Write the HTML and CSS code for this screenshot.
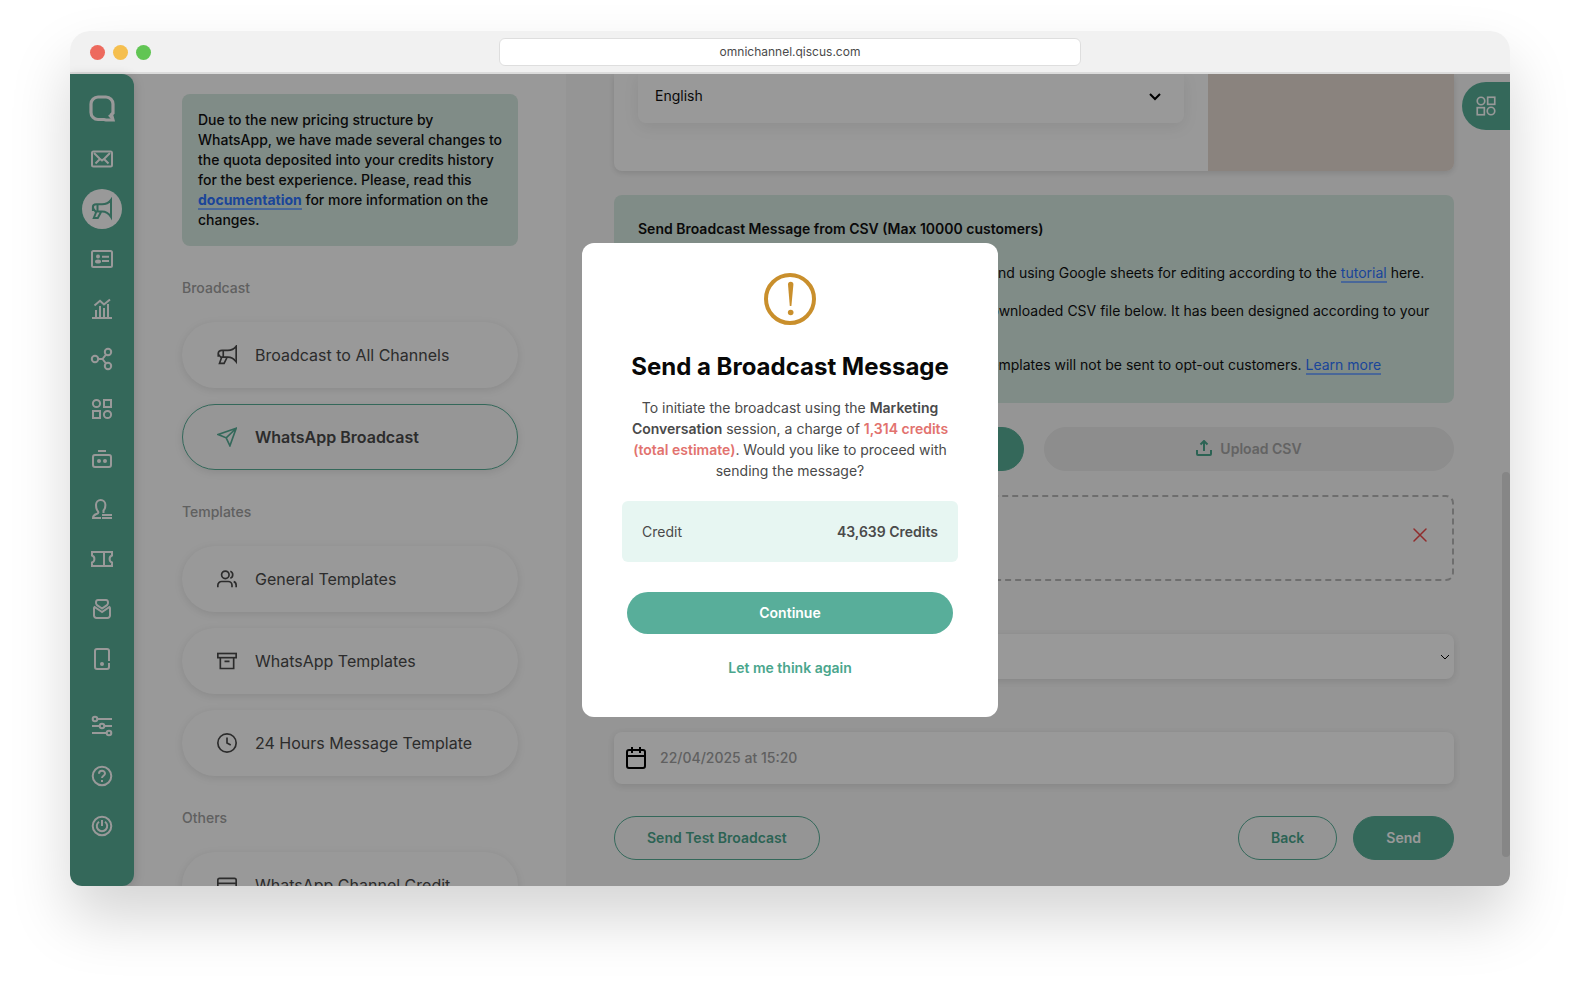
FILE: index.html
```html
<!DOCTYPE html>
<html lang="en">
<head>
  <meta charset="UTF-8">
  <title>Qiscus Omnichannel - WhatsApp Broadcast</title>
  <link rel="stylesheet" href="styles.css">
</head>
<body>

  <div class="browser">
    <div class="titlebar">
      <div class="dots">
        <span class="dot red"></span>
        <span class="dot yellow"></span>
        <span class="dot green"></span>
      </div>
      <input class="address" type="text" value="omnichannel.qiscus.com" aria-label="Address">
    </div>

    <div class="app">
      <!-- Sidebar -->
      <nav class="sidebar">
        <svg class="logo" viewBox="0 0 26 27"><path d="M9 2h8a7 7 0 0 1 7 7v9l-1.500 1.500 1.500 5.500h-7l-2-.5H9a7 7 0 0 1-7-7V9a7 7 0 0 1 7-7z" stroke-width="3.200"/><path d="M20 20l4 4.500" stroke-width="2.500"/></svg>
        <button class="nav-btn" aria-label="Inbox"><svg viewBox="0 0 24 24"><rect x="2" y="4.500" width="20" height="15" rx="1.500"/><path d="M4 6l5.500 5.500L12 13.500l2.500-2L20 6M5.500 16.500l4-4M18.500 16.500l-4-4"/></svg></button>
        <button class="nav-btn active" aria-label="Broadcast"><svg viewBox="0 0 24 24"><path d="M21 2.800c-2.500 3.500-6 4.500-9 4.500H6.200C4 7.300 2.900 8.500 2.900 10c0 1.600 1.100 2.600 2.500 4.500H12c3 0 6.500 1.500 9 5.500zM7.500 7.500v7M6.200 15l-2.400 6h4l3.200-6M2.900 9.500V14"/></svg></button>
        <button class="nav-btn" aria-label="Contacts"><svg viewBox="0 0 24 24"><rect x="2" y="4" width="20" height="16" rx="1.500"/><circle class="fill" cx="8" cy="9.600" r="2"/><ellipse class="fill" cx="8" cy="14.600" rx="3" ry="2"/><path d="M12 9.800h7M12 14h7"/></svg></button>
        <button class="nav-btn" aria-label="Analytics"><svg viewBox="0 0 24 24"><path d="M2 21h20M6 21v-8M10 21V9M14 21V11M18 21V7M4.500 8.500L10 3.800l4 3.700 6-5"/></svg></button>
        <button class="nav-btn" aria-label="Integration"><svg viewBox="0 0 24 24"><circle cx="5" cy="12" r="3.200"/><circle cx="18" cy="5" r="3.200"/><circle cx="18" cy="19" r="3.200"/><path d="M8 12h4.500L16 7.500M12.500 12l3.500 4.500"/></svg></button>
        <button class="nav-btn" aria-label="App center"><svg viewBox="0 0 24 24"><circle cx="6.500" cy="6.500" r="3.600"/><rect x="14" y="3" width="7" height="7"/><rect x="3" y="14" width="7" height="7"/><circle cx="17.500" cy="17.500" r="3.600"/></svg></button>
        <button class="nav-btn" aria-label="Bot"><svg viewBox="0 0 24 24"><rect x="3" y="8" width="18" height="12" rx="2"/><path d="M8 4h8"/><circle class="fill" cx="9" cy="14" r="2"/><circle class="fill" cx="15" cy="14" r="2"/></svg></button>
        <button class="nav-btn" aria-label="Agents"><svg viewBox="0 0 24 24"><path d="M11 21H3c0-2.500 1.500-3.300 3.500-4 2-.6 2.300-2 1.200-3C6.500 12.500 6 10.500 6 8a4.700 5 0 0 1 9.400 0c0 2.500-.4 4-1.900 5.500V16M12 18h10M12 21h10"/></svg></button>
        <button class="nav-btn" aria-label="Tickets"><svg viewBox="0 0 24 24"><path d="M2 5h20v3.500c-3.200 1-3.200 6 0 7V19H2v-3.500c3.200-1 3.200-6 0-7zM14 5v14"/></svg></button>
        <button class="nav-btn" aria-label="Mail"><svg viewBox="0 0 24 24"><path d="M12 15l-7.500-5C3.800 10.500 4 11 4 12v6.500A2.500 2.500 0 0 0 6.500 21h11a2.500 2.500 0 0 0 2.500-2.500V12c0-1 .2-1.500-.5-2zM12 11.500L7 8.200C5.500 7 5.500 3 8 3h8c2.500 0 2.500 4 1 5.200z"/></svg></button>
        <button class="nav-btn" aria-label="Devices"><svg viewBox="0 0 24 24"><path d="M19 14V4a2 2 0 0 0-2-2H7a2 2 0 0 0-2 2v16a2 2 0 0 0 2 2h10a2 2 0 0 0 2-2v-4"/><circle class="fill" cx="12" cy="17" r="2"/></svg></button>
        <button class="nav-btn settings" aria-label="Settings"><svg viewBox="0 0 24 24"><circle cx="5" cy="5" r="2.300"/><circle cx="12" cy="12" r="2.300"/><circle cx="19" cy="19" r="2.300"/><path d="M7.500 5H22M2 12h7.500M14.500 12H22M2 19h14.500"/></svg></button>
        <button class="nav-btn" aria-label="Help"><svg viewBox="0 0 24 24"><circle cx="12" cy="12" r="9.300"/><path d="M9 9.800c0-4 6-4 6-.3 0 2.200-3 2.200-3 4.500M12 16v2"/></svg></button>
        <button class="nav-btn" aria-label="Log out"><svg viewBox="0 0 24 24"><circle cx="12" cy="12" r="9.300"/><path d="M9 7.800a5.200 5.200 0 1 0 6 0M12 6v6"/></svg></button>
      </nav>

      <!-- Broadcast menu -->
      <aside class="menu">
        <p class="notice">Due to the new pricing structure by WhatsApp, we have made several changes to the quota deposited into your credits history for the best experience. Please, read this <a class="link bold" href="#">documentation</a> for more information on the changes.</p>

        <h2>Broadcast</h2>
        <div class="menu-group">
          <a class="menu-item" href="#"><svg viewBox="0 0 24 24"><path d="M23 1.500c-3 4-7 5-10 5H6C3.200 6.500 1.500 8 1.500 10c0 1.800 1.200 3 3 4.500H13c3 0 7 1.500 10 5.500zM7.500 6.500v8M5.500 15L3 22h5.500l3.500-7M1.500 9.500V14"/></svg>Broadcast to All Channels</a>
          <a class="menu-item selected" href="#"><svg viewBox="0 0 24 24"><path d="M23 1.500L1.500 9l9.500 4 4.500 9.500zM23 1.500L11 13"/></svg>WhatsApp Broadcast</a>
        </div>

        <h2>Templates</h2>
        <div class="menu-group">
          <a class="menu-item" href="#"><svg viewBox="0 0 24 24"><circle cx="10" cy="7" r="4.500"/><path d="M1 22v-2.500a4.500 4.500 0 0 1 4.500-4.500h8a4.500 4.500 0 0 1 4.500 4.500V22M16 2.800a4.500 4.500 0 0 1 0 8.400M20 15.200c2 .5 3 2 3 4.300V22"/></svg>General Templates</a>
          <a class="menu-item" href="#"><svg viewBox="0 0 24 24"><rect x="1" y="3" width="22" height="5"/><path d="M4 8v13h16V8M9 12.500h6"/></svg>WhatsApp Templates</a>
          <a class="menu-item" href="#"><svg viewBox="0 0 24 24"><circle cx="12" cy="12" r="11"/><path d="M12 5.500V12l4.500 2.500"/></svg>24 Hours Message Template</a>
        </div>

        <h2>Others</h2>
        <div class="menu-group">
          <a class="menu-item" href="#"><svg viewBox="0 0 24 24"><rect x="1" y="4" width="22" height="17" rx="2"/><path d="M1 10h22"/></svg>WhatsApp Channel Credit</a>
        </div>
      </aside>

      <!-- Broadcast form -->
      <main class="content">
        <div class="preview">
          <div class="preview-form">
            <div class="language">
              <select aria-label="Language"><option>English</option></select>
              <svg viewBox="0 0 12 8"><path d="M1 1l5 5 5-5"/></svg>
            </div>
          </div>
          <div class="preview-phone"></div>
        </div>

        <section class="csv-info">
          <h3>Send Broadcast Message from CSV (Max 10000 customers)</h3>
          <ol>
            <li>Download the CSV template here first. We recommend using Google sheets for editing according to the <a class="link" href="#">tutorial</a> here.</li>
            <li>Please fill in your required customer data into the downloaded CSV file below. It has been designed according to your message template.</li>
            <li>Kindly note that messages that use our Marketing templates will not be sent to opt-out customers. <a class="link" href="#">Learn more</a></li>
          </ol>
        </section>

        <div class="csv-actions">
          <button class="btn primary">Download CSV</button>
          <button class="btn muted" disabled><svg viewBox="0 0 16 16"><path d="M1 10v4a1 1 0 0 0 1 1h12a1 1 0 0 0 1-1v-4M8 11V1.500M4.500 4.500L8 1l3.500 3.500"/></svg>Upload CSV</button>
        </div>

        <div class="file-box">
          <span>customers.csv</span>
          <button class="remove" aria-label="Remove file"><svg viewBox="0 0 14 14"><path d="M1 1l12 12M13 1L1 13"/></svg></button>
        </div>

        <label for="schedule">Schedule</label>
        <div class="field">
          <select id="schedule"><option>Send later</option></select>
          <svg viewBox="0 0 12 8"><path d="M2 2l4 4 4-4"/></svg>
        </div>

        <label for="sendAt">Date and time</label>
        <div class="field date">
          <svg viewBox="0 0 20 22"><rect x="1" y="3" width="18" height="18" rx="2"/><path d="M1 9h18M6 0v6M14 0v6"/></svg>
          <input type="text" id="sendAt" value="22/04/2025 at 15:20">
        </div>

        <div class="form-actions">
          <button class="btn outline">Send Test Broadcast</button>
          <div class="form-right">
            <button class="btn outline">Back</button>
            <button class="btn primary">Send</button>
          </div>
        </div>
      </main>

      <div class="scroll-thumb"></div>
      <button class="app-tab" aria-label="Open apps"><svg viewBox="0 0 24 24"><circle cx="6" cy="6" r="4.500"/><rect x="14" y="1.500" width="8.500" height="8.500"/><rect x="1.500" y="14" width="8.500" height="8.500"/><circle cx="18" cy="18" r="4.500"/></svg></button>

      <!-- Confirmation dialog -->
      <div class="overlay">
        <div class="modal" role="dialog" aria-labelledby="modalTitle">
          <svg class="warning" viewBox="0 0 52 52"><circle cx="26" cy="26" r="24"/><path d="M24 11.500a2.700 2.700 0 0 1 5.400 0L27.400 33h-1.600z"/><circle class="point" cx="26.700" cy="39.500" r="2.800"/></svg>
          <h1 id="modalTitle">Send a Broadcast Message</h1>
          <p>To initiate the broadcast using the <b>Marketing Conversation</b> session, a charge of <b class="cost">1,314 credits (total estimate)</b>. Would you like to proceed with sending the message?</p>
          <div class="credit">
            <span>Credit</span>
            <b>43,639 Credits</b>
          </div>
          <button class="continue">Continue</button>
          <button class="cancel">Let me think again</button>
        </div>
      </div>
    </div>
  </div>

</body>
</html>
```
FILE: styles.css
```css
* {
  box-sizing: border-box;
}
body {
  margin: 0;
  padding: 31px 70px 109px;
  height: 100vh;
  background: #fff;
  font-family: Inter, sans-serif;
  font-size: 14px;
  color: #101010;
}
button, input, select {
  font-family: inherit;
  font-size: 14px;
}
button {
  cursor: pointer;
}
svg {
  fill: none;
  stroke: currentColor;
  stroke-width: 2;
  flex-shrink: 0;
}
.browser {
  height: 100%;
  display: flex;
  flex-direction: column;
  border-radius: 20px 20px 12px 12px;
  overflow: hidden;
  box-shadow: 0 32px 60px rgba(0,0,0,0.17);
}
.titlebar {
  height: 43px;
  flex-shrink: 0;
  display: grid;
  grid-template-columns: 1fr minmax(200px, 582px) 1fr;
  align-items: center;
  background: #f1f1f1;
  border-bottom: 2px solid #dcdcdc;
}
.dots {
  display: flex;
  gap: 8px;
  padding: 2px 0 0 20px;
}
.dot {
  width: 15px;
  height: 15px;
  border-radius: 50%;
}
.red { background: #ed6a5e; }
.yellow { background: #f5bf4f; }
.green { background: #61c554; }
.address {
  height: 28px;
  border: 1px solid #dedede;
  border-radius: 6px;
  background: #fff;
  text-align: center;
  font-size: 12px;
  color: #4a4a4a;
}
.app {
  position: relative;
  flex: 1;
  min-height: 0;
  display: flex;
  background: #fff;
}

/* Sidebar */
.sidebar {
  width: 64px;
  flex-shrink: 0;
  display: flex;
  flex-direction: column;
  align-items: center;
  gap: 10px;
  padding-top: 21px;
  overflow: hidden;
  background: #57ae97;
  color: #fff;
  border-radius: 0 12px 12px 12px;
  box-shadow: 0 2px 12px rgba(0,0,0,0.16);
}
.logo {
  width: 26px;
  height: 27px;
  margin-bottom: 7px;
}
.nav-btn {
  width: 40px;
  height: 40px;
  flex-shrink: 0;
  display: flex;
  align-items: center;
  justify-content: center;
  padding: 0;
  border: none;
  border-radius: 50%;
  background: none;
  color: #fff;
}
.nav-btn svg {
  width: 24px;
  height: 24px;
}
.nav-btn .fill {
  fill: currentColor;
  stroke: none;
}
.nav-btn.active {
  background: #fff;
  color: #57ae97;
}
.settings {
  margin-top: 17px;
}

/* Broadcast menu */
.menu {
  width: 432px;
  flex-shrink: 0;
  padding: 20px 48px;
  overflow: hidden;
}
.notice {
  margin: 0;
  padding: 16px 12px 16px 16px;
  border-radius: 8px;
  background: #d6e9e1;
  font-weight: 500;
  line-height: 20px;
}
.link {
  color: #2e74ff;
  text-decoration: none;
  border-bottom: 2px solid #7aacff;
}
.link.bold {
  font-weight: 700;
}
.menu h2 {
  margin: 32px 0 24px;
  font-size: 14px;
  font-weight: 500;
  line-height: 20px;
  color: #a0a0a0;
}
.menu-group {
  display: flex;
  flex-direction: column;
  gap: 16px;
}
.menu-item {
  height: 66px;
  display: flex;
  align-items: center;
  gap: 18px;
  padding: 0 34px;
  border: 1px solid transparent;
  border-radius: 33px;
  background: #fff;
  box-shadow: 0 2px 8px rgba(0,0,0,0.1);
  color: #4a4a4a;
  font-size: 16px;
  text-decoration: none;
}
.menu-item svg {
  width: 20px;
  height: 20px;
}
.menu-item.selected {
  border-color: #57ae97;
  background: #fafafa;
  font-weight: 600;
}
.menu-item.selected svg {
  color: #57ae97;
}

/* Broadcast form */
.content {
  flex: 1;
  min-width: 0;
  padding: 0 56px 26px 48px;
  overflow: hidden;
  background: #f9f9f9;
}
.preview {
  height: 97px;
  display: flex;
  border-radius: 0 0 8px 8px;
  overflow: hidden;
  background: #fff;
  box-shadow: 0 2px 6px rgba(0,0,0,0.12);
}
.preview-form {
  flex: 1;
  padding: 0 24px;
}
.preview-phone {
  width: 246px;
  background: #e6dad2;
}
.language, .field {
  display: flex;
  align-items: center;
  background: #fff;
}
.language {
  height: 49px;
  padding: 0 23px 4px 17px;
  border-radius: 0 0 8px 8px;
  box-shadow: 0 4px 16px rgba(0,0,0,0.08);
}
.language svg, .field svg {
  width: 12px;
  height: 8px;
  color: #000;
}
.language select, .field select, .field input {
  flex: 1;
  min-width: 0;
  padding: 0 0 2px;
  border: none;
  background: none;
  appearance: none;
  color: #101010;
}
.csv-info {
  margin-top: 24px;
  padding: 24px 24px 30px;
  border-radius: 8px;
  background: #d6e9e1;
}
.csv-info h3 {
  margin: 0 0 26px;
  font-size: 14px;
  font-weight: 600;
  line-height: 20px;
}
.csv-info ol {
  display: flex;
  flex-direction: column;
  gap: 22px;
  margin: 0;
  padding: 0 0 0 16px;
  line-height: 16px;
}
.csv-actions {
  display: grid;
  grid-template-columns: 1fr 1fr;
  gap: 20px;
  margin: 24px 0;
}
.btn {
  height: 44px;
  display: flex;
  align-items: center;
  justify-content: center;
  gap: 8px;
  padding: 0 32px 2px;
  border: 1px solid #57ae97;
  border-radius: 22px;
  font-weight: 600;
}
.primary {
  background: #57ae97;
  color: #fff;
}
.outline {
  background: none;
  color: #4aa68d;
}
.muted {
  border-color: #ebebeb;
  background: #ebebeb;
  color: #a6a6a6;
}
.muted svg {
  width: 16px;
  height: 16px;
  color: #4aa68d;
}
.file-box {
  height: 86px;
  display: flex;
  align-items: center;
  justify-content: space-between;
  padding: 0 25px 6px;
  border: 2px dashed #b8b8b8;
  border-radius: 8px;
}
.remove {
  display: flex;
  padding: 0;
  border: none;
  background: none;
  color: #f04a4a;
}
.remove svg {
  width: 14px;
  height: 14px;
  stroke-width: 1.5;
  stroke-linecap: round;
}
.content label {
  display: block;
  margin: 16px 0;
  line-height: 21px;
}
.field {
  height: 45px;
  padding: 0 3px 0 16px;
  border-radius: 8px;
  box-shadow: 0 2px 8px rgba(0,0,0,0.12);
}
.field svg {
  stroke-width: 1;
}
.field.date {
  height: 52px;
  gap: 14px;
  padding: 0 12px;
}
.date svg {
  width: 20px;
  height: 22px;
  stroke-width: 2;
}
.date input {
  font-weight: 500;
  color: #a0a0a0;
}
.form-actions, .form-right {
  display: flex;
  justify-content: space-between;
  gap: 16px;
}
.form-actions {
  margin-top: 32px;
}
.scroll-thumb {
  position: absolute;
  top: 49%;
  right: 0;
  width: 8px;
  height: 385px;
  border-radius: 4px;
  background: #dfdfdf;
}
.app-tab {
  position: absolute;
  top: 8px;
  right: 0;
  width: 48px;
  height: 48px;
  display: flex;
  align-items: center;
  padding: 0 14px;
  border: none;
  border-radius: 24px 0 0 24px;
  background: #57ae97;
  color: #fff;
}
.app-tab svg {
  width: 20px;
  height: 20px;
}

/* Confirmation dialog */
.overlay {
  position: absolute;
  inset: 0;
  display: flex;
  align-items: center;
  justify-content: center;
  background: rgba(0,0,0,0.4);
}
.modal {
  width: 416px;
  display: flex;
  flex-direction: column;
  align-items: center;
  padding: 30px 40px 39px;
  border-radius: 12px;
  background: #fff;
  text-align: center;
  color: #4a4a4a;
}
.warning {
  width: 52px;
  height: 52px;
  stroke: #c98f2c;
  stroke-width: 4;
}
.warning path, .point {
  fill: #c98f2c;
  stroke: none;
}
.modal h1 {
  margin: 26px 0 14px;
  font-size: 24px;
  font-weight: 700;
  line-height: 32px;
  color: #080808;
}
.modal p {
  width: 326px;
  margin: 0;
  line-height: 21px;
}
.modal b {
  font-weight: 600;
}
.modal .cost {
  color: #e2726e;
}
.credit {
  align-self: stretch;
  display: flex;
  justify-content: space-between;
  margin: 20px 0 30px;
  padding: 20px;
  border-radius: 6px;
  background: #e7f6f2;
  line-height: 21px;
}
.continue {
  width: 326px;
  height: 42px;
  padding: 0 0 2px;
  border: none;
  border-radius: 21px;
  background: #58ae9a;
  color: #fff;
  font-weight: 600;
}
.cancel {
  margin-top: 24px;
  padding: 0;
  border: none;
  background: none;
  color: #4aa68d;
  font-weight: 600;
  line-height: 20px;
}
```
